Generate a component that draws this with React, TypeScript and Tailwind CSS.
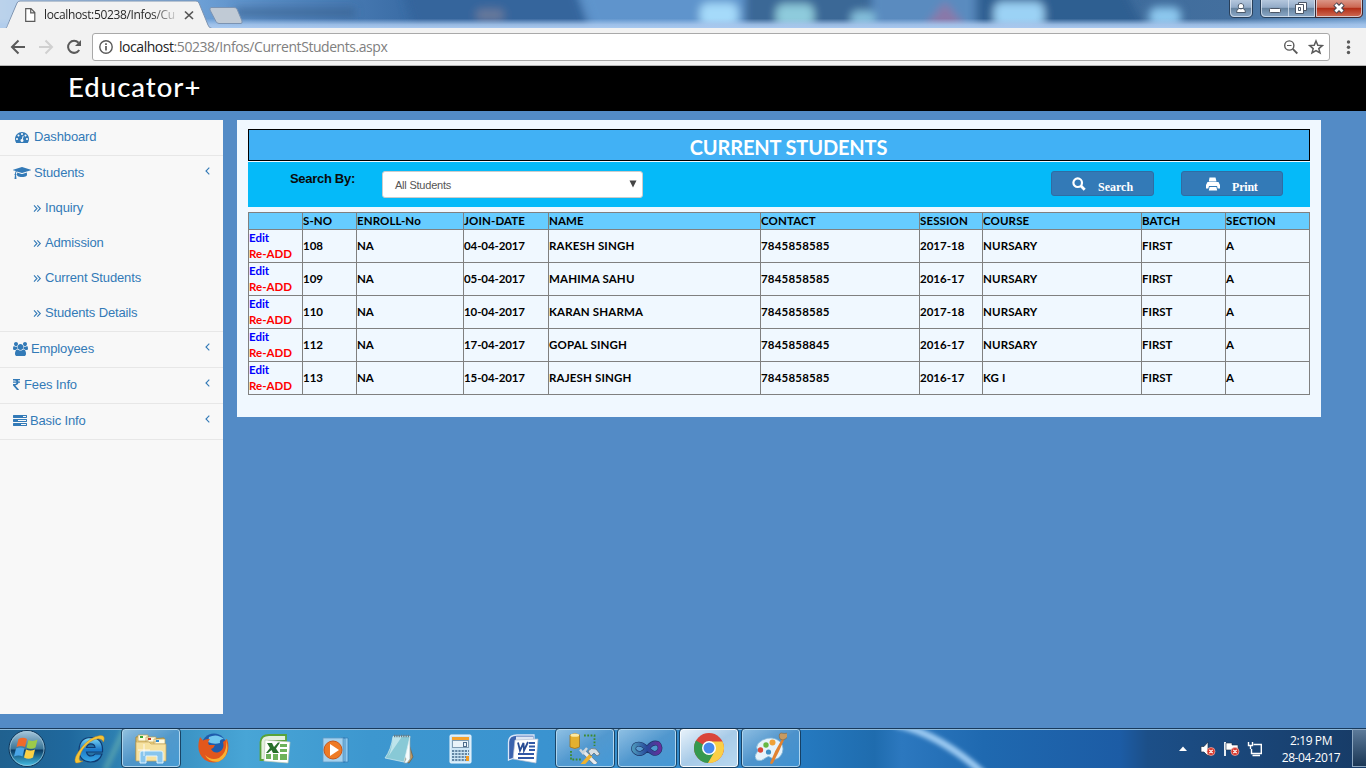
import type { ReactNode } from "react";

const PATHS = {
  gauge:
    "M384 384q0 53 -37.5 90.5t-90.5 37.5t-90.5 -37.5t-37.5 -90.5t37.5 -90.5t90.5 -37.5t90.5 37.5t37.5 90.5zM576 832q0 53 -37.5 90.5t-90.5 37.5t-90.5 -37.5t-37.5 -90.5t37.5 -90.5t90.5 -37.5t90.5 37.5t37.5 90.5zM1004 351l101 382q6 26 -7.5 48.5t-38.5 29.5t-48 -6.5t-30 -39.5l-101 -382q-60 -5 -107 -43.5t-63 -98.5q-20 -77 20 -146t117 -89t146 20t89 117q16 60 -6 117t-72 91zM1664 384q0 53 -37.5 90.5t-90.5 37.5t-90.5 -37.5t-37.5 -90.5t37.5 -90.5t90.5 -37.5t90.5 37.5t37.5 90.5zM1024 1024q0 53 -37.5 90.5t-90.5 37.5t-90.5 -37.5t-37.5 -90.5t37.5 -90.5t90.5 -37.5t90.5 37.5t37.5 90.5zM1472 832q0 53 -37.5 90.5t-90.5 37.5t-90.5 -37.5t-37.5 -90.5t37.5 -90.5t90.5 -37.5t90.5 37.5t37.5 90.5zM1792 384q0 -261 -141 -483q-19 -29 -54 -29h-1402q-35 0 -54 29q-141 221 -141 483q0 182 71 348t191 286t286 191t348 71t348 -71t286 -191t191 -286t71 -348z",
  cap: "M1774 700l18 -316q4 -69 -82 -128t-235 -93.5t-323 -34.5t-323 34.5t-235 93.5t-82 128l18 316l574 -181q22 -7 48 -7t48 7zM2304 1024q0 -23 -22 -31l-1120 -352q-4 -1 -10 -1t-10 1l-652 206q-43 -34 -71 -111.5t-34 -178.5q63 -36 63 -109q0 -69 -58 -107l58 -433q2 -14 -8 -25q-9 -11 -24 -11h-192q-15 0 -24 11q-10 11 -8 25l58 433q-58 38 -58 107q0 73 65 111q11 207 98 330l-333 104q-22 8 -22 31t22 31l1120 352q4 1 10 1t10 -1l1120 -352q22 -8 22 -31z",
  users:
    "M593 640q-162 -5 -265 -128h-134q-82 0 -138 40.5t-56 118.5q0 353 124 353q6 0 43.5 -21t97.5 -42.5t119 -21.5q67 0 133 23q-5 -37 -5 -66q0 -139 81 -256zM1664 3q0 -120 -73 -189.5t-194 -69.5h-874q-121 0 -194 69.5t-73 189.5q0 53 3.5 103.5t14 109t26.5 108.5t43 97.5t62 81t85.5 53.5t111.5 20q10 0 43 -21.5t73 -48t107 -48t135 -21.5t135 21.5t107 48t73 48t43 21.5q61 0 111.5 -20t85.5 -53.5t62 -81t43 -97.5t26.5 -108.5t14 -109t3.5 -103.5zM640 1280q0 -106 -75 -181t-181 -75t-181 75t-75 181t75 181t181 75t181 -75t75 -181zM1344 896q0 -159 -112.5 -271.5t-271.5 -112.5t-271.5 112.5t-112.5 271.5t112.5 271.5t271.5 112.5t271.5 -112.5t112.5 -271.5zM1920 671q0 -78 -56 -118.5t-138 -40.5h-134q-103 123 -265 128q81 117 81 256q0 29 -5 66q66 -23 133 -23q59 0 119 21.5t97.5 42.5t43.5 21q124 0 124 -353zM1792 1280q0 -106 -75 -181t-181 -75t-181 75t-75 181t75 181t181 75t181 -75t75 -181z",
  rupee:
    "M898 1066v-102q0 -14 -9 -23t-23 -9h-168q-23 -144 -129 -234t-276 -110q167 -178 459 -536q14 -16 4 -34q-8 -18 -29 -18h-195q-16 0 -25 12q-306 367 -498 571q-9 9 -9 22v127q0 13 9.5 22.5t22.5 9.5h112q132 0 212.5 43t102.5 125h-427q-14 0 -23 9t-9 23v102q0 14 9 23t23 9h413q-57 113 -268 113h-145q-13 0 -22.5 9.5t-9.5 22.5v133q0 14 9 23t23 9h832q14 0 23 -9t9 -23v-102q0 -14 -9 -23t-23 -9h-233q47 -61 64 -144h171q14 0 23 -9t9 -23z",
  tasks:
    "M1024 128h640v128h-640v-128zM640 640h1024v128h-1024v-128zM1280 1152h384v128h-384v-128zM1792 320v-256q0 -26 -19 -45t-45 -19h-1664q-26 0 -45 19t-19 45v256q0 26 19 45t45 19h1664q26 0 45 -19t19 -45zM1792 832v-256q0 -26 -19 -45t-45 -19h-1664q-26 0 -45 19t-19 45v256q0 26 19 45t45 19h1664q26 0 45 -19t19 -45zM1792 1344v-256q0 -26 -19 -45t-45 -19h-1664q-26 0 -45 19t-19 45v256q0 26 19 45t45 19h1664q26 0 45 -19t19 -45z",
};

function Glyph({ name, units }: { name: keyof typeof PATHS; units: number }) {
  return (
    <svg width={(units / 1792) * 14} height={14} viewBox={`0 0 ${units} 1792`} className="shrink-0 fill-[#337ab7]">
      <path transform="translate(0,1536) scale(1,-1)" d={PATHS[name]} />
    </svg>
  );
}

function TitleBackdrop() {
  return (
    <svg width="1366" height="28" viewBox="0 0 1366 28" className="absolute inset-0">
      <defs>
        <linearGradient id="tb" x1="0" x2="1366" gradientUnits="userSpaceOnUse">
          <stop offset="0" stopColor="#c3d8ee" />
          <stop offset="0.03" stopColor="#a9c8ea" />
          <stop offset="0.14" stopColor="#6fa2d8" />
          <stop offset="0.2" stopColor="#5689c1" />
          <stop offset="0.3" stopColor="#3a6ca5" />
          <stop offset="0.4" stopColor="#5e93cc" />
          <stop offset="0.5" stopColor="#4676a8" />
          <stop offset="0.62" stopColor="#3e6d9f" />
          <stop offset="0.76" stopColor="#3c6a9b" />
          <stop offset="0.9" stopColor="#436f9e" />
          <stop offset="1" stopColor="#6d9bcb" />
        </linearGradient>
        <linearGradient id="tbf" x1="0" x2="0" y1="0" y2="1">
          <stop offset="0.66" stopColor="#a9c8ee" stopOpacity="0" />
          <stop offset="0.88" stopColor="#a9c8ee" stopOpacity="0.85" />
          <stop offset="1" stopColor="#a9c8ee" />
        </linearGradient>
        <filter id="b3" filterUnits="userSpaceOnUse" x="0" y="-40" width="1366" height="110">
          <feGaussianBlur stdDeviation="4" />
        </filter>
      </defs>
      <rect width="1366" height="28" fill="url(#tb)" />
      <g filter="url(#b3)">
        <path d="M400 -20H572L596 50H420Z" fill="#34659c" />
        <path d="M576 -20H745V50H600Z" fill="#5f94cc" />
        <path d="M745 -20H870V50H745Z" fill="#3a6896" />
        <path d="M872 -20H975V50H872Z" fill="#5a8bbf" />
        <path d="M980 -20H1120L1155 50H980Z" fill="#2f5e91" />
        <rect x="235" y="8" width="120" height="9" fill="#37618e" opacity=".7" />
        <rect x="476" y="9" width="28" height="12" rx="5" fill="#67799a" />
        <rect x="700" y="3" width="38" height="24" rx="8" fill="#a5dafa" />
        <rect x="776" y="4" width="38" height="24" rx="8" fill="#8ecbdc" />
        <rect x="851" y="11" width="24" height="16" rx="6" fill="#84bfdc" />
        <path d="M924 28L945 2L966 28Z" fill="#8a78a8" />
        <rect x="994" y="2" width="50" height="26" rx="8" fill="#9bd2f5" />
        <rect x="1149" y="7" width="32" height="20" rx="8" fill="#8cc7ee" />
      </g>
      <rect width="1366" height="28" fill="url(#tbf)" />
    </svg>
  );
}

function TabStrip() {
  return (
    <div className="relative h-7 w-full overflow-hidden">
      <TitleBackdrop />
      <svg width="250" height="28" viewBox="0 0 250 28" className="absolute left-0 top-0">
        <path d="M0 28.5H5C7 28 7 26 8 24L17 3Q18 1 20 1H196Q198 1 199 3L208 25Q209 28 212 28.500" fill="#f2f2f2" stroke="#7d93b0" />
        <path d="M0 0H17L6 28H0Z" fill="#b6cfea" opacity=".6" />
        <path d="M211 7.500H234Q236 7.500 237 9L242 21Q242.500 23.500 241 23.500H219Q217 23.500 216 21.500L210 10Q209.500 8 211 7.500Z" fill="#c0cad5" stroke="#7b93b2" />
        <path d="M25.700 8.700H31L34.800 12.500V21.300H25.700ZM30.700 8.700V12.800H34.800" fill="#fff" stroke="#5a5a5a" strokeWidth="1.200" />
        <path d="M185 11.500L193 19M193 11.500L185 19" stroke="#555" strokeWidth="1.700" />
      </svg>
      <div className="relative ml-11 mt-[7px] w-[134px] overflow-hidden whitespace-nowrap bg-gradient-to-r from-[#222] from-80% to-[#222]/10 bg-clip-text font-['Open_Sans','Noto_Sans',sans-serif] text-[12px] leading-4 tracking-[-0.35px] text-transparent">
        localhost:50238/Infos/Cu
      </div>
      <svg width="140" height="20" viewBox="0 0 140 20" className="absolute right-0 top-0">
        <defs>
          <linearGradient id="wb" x1="0" x2="0" y1="0" y2="1">
            <stop offset="0" stopColor="#b9cbe0" />
            <stop offset=".45" stopColor="#93abc8" />
            <stop offset=".5" stopColor="#66839f" />
            <stop offset="1" stopColor="#8eabcb" />
          </linearGradient>
          <linearGradient id="wr" x1="0" x2="0" y1="0" y2="1">
            <stop offset="0" stopColor="#dd9c8d" />
            <stop offset=".45" stopColor="#cc6752" />
            <stop offset=".5" stopColor="#b32d16" />
            <stop offset="1" stopColor="#d0705a" />
          </linearGradient>
        </defs>
        <path d="M3.500 -1V13Q3.500 17.500 8 17.500H22Q26.500 17.500 26.500 13V-1Z" fill="url(#wb)" stroke="#283f5a" />
        <path d="M34.500 -1V13Q34.500 17.500 39 17.500H92V-1Z" fill="url(#wb)" stroke="#283f5a" />
        <path d="M89.500 -1V17.500H132Q136.500 17.500 136.500 13V-1Z" fill="url(#wr)" stroke="#3c2830" />
        <path d="M62.500 0V17M4.500 0V13Q5 16.500 8 16.500H22Q25.500 16 25.500 13V0M35.500 0V13Q36 16.500 39 16.500H88.500V0M90.500 0V16.500H132Q135.500 16 135.500 13V0" fill="none" stroke="#dce6f1" strokeOpacity=".75" />
        <path d="M15 3.500a2.700 2.700 0 1 1 -.1 0ZM10.500 12.500Q10.500 9 13 8.500H17Q19.500 9 19.500 12.500Z" fill="#fff" stroke="#4c5a6c" />
        <rect x="43.500" y="8.500" width="11" height="4" rx="1" fill="#fff" stroke="#4c5666" />
        <path d="M72.500 2.500H80.500V10.500H72.500Z" fill="#fff" stroke="#4c5666" />
        <path d="M69.500 4.500H77.500V13.500H69.500ZM72.500 7.500H74.500V10.500H72.500Z" fill="#fff" stroke="#4c5666" fillRule="evenodd" />
        <path d="M109 4L117 12M117 4L109 12" stroke="#4b4550" strokeWidth="5" />
        <path d="M109.500 4.500L116.500 11.500M116.500 4.500L109.500 11.500" stroke="#fff" strokeWidth="2.800" />
      </svg>
    </div>
  );
}

function Toolbar() {
  return (
    <div className="flex h-[38px] items-center border-b border-[#b6b6b6] bg-[#f2f2f2]">
      <svg width="92" height="38" viewBox="0 0 92 38" fill="none" className="shrink-0">
        <path d="M25 19H12.500M18.500 12.500L12 19L18.500 25.500" stroke="#5a5a5a" strokeWidth="2" />
        <path d="M39 19H51.500M45.500 12.500L52 19L45.500 25.500" stroke="#d0d0d0" strokeWidth="2" />
        <path d="M79.200 22A6 6 0 1 1 78.500 14.800" stroke="#5a5a5a" strokeWidth="2" />
        <path d="M81 12V18H75Z" fill="#5a5a5a" />
      </svg>
      <div className="flex h-7 w-[1238px] shrink-0 items-center rounded-[3px] border border-[#a9a9a9] bg-white pl-[5px] pr-[5px]">
        <svg width="16" height="16" viewBox="0 0 16 16" fill="none" className="shrink-0">
          <circle cx="8" cy="8" r="6.200" stroke="#5a5a5a" strokeWidth="1.400" />
          <path d="M8 4.300V6M8 7V11.500" stroke="#5a5a5a" strokeWidth="1.700" />
        </svg>
        <div className="ml-[5px] flex-1 whitespace-nowrap font-['Open_Sans','Noto_Sans',sans-serif] text-[14px] leading-5 tracking-[-0.45px] text-[#808080]">
          <span className="text-[#222]">localhost</span>:50238/Infos/CurrentStudents.aspx
        </div>
        <svg width="40" height="18" viewBox="0 0 40 18" fill="none" className="shrink-0">
          <circle cx="5.300" cy="7.500" r="4.600" stroke="#5a5a5a" strokeWidth="1.400" />
          <path d="M3 7.500H7.500" stroke="#5a5a5a" />
          <path d="M8.700 10.900L13.300 15.500" stroke="#5a5a5a" strokeWidth="1.800" />
          <path d="M33 3L34.800 7.300L39.300 7.600L35.800 10.600L37 15L33 12.600L29 15L30.200 10.600L26.700 7.600L31.200 7.300Z" stroke="#5a5a5a" strokeWidth="1.500" transform="translate(-1 0)" />
        </svg>
      </div>
      <svg width="36" height="20" viewBox="0 0 36 20" fill="#5a5a5a">
        <circle cx="18.500" cy="5" r="1.700" />
        <circle cx="18.500" cy="10.300" r="1.700" />
        <circle cx="18.500" cy="15.500" r="1.700" />
      </svg>
    </div>
  );
}

function Angle() {
  return (
    <svg width="5" height="8" viewBox="0 0 5 8" fill="none" className="ml-auto mr-[13px] mt-[-4px] shrink-0">
      <path d="M4.300 0.700L1 4L4.300 7.300" stroke="#337ab7" strokeWidth="1.100" />
    </svg>
  );
}

function MenuRow({ icon, label, pad, gap, arrow = true }: { icon: ReactNode; label: string; pad: string; gap: string; arrow?: boolean }) {
  return (
    <a className={`flex h-[35px] items-center ${pad} pb-[2px]`}>
      {icon}
      <span className={`${gap} leading-[18px]`}>{label}</span>
      {arrow && <Angle />}
    </a>
  );
}

function Sidebar() {
  const subs = ["Inquiry", "Admission", "Current Students", "Students Details"];
  return (
    <nav className="h-[594px] w-[223px] shrink-0 bg-[#f8f8f8] font-['Liberation_Sans',Arial,sans-serif] text-[13px] tracking-[-0.14px] text-[#337ab7] [&>div]:border-b [&>div]:border-[#e7e7e7]">
      <div>
        <MenuRow icon={<Glyph name="gauge" units={1792} />} label="Dashboard" pad="pl-[15px]" gap="ml-[5px]" arrow={false} />
      </div>
      <div>
        <MenuRow icon={<Glyph name="cap" units={2304} />} label="Students" pad="pl-[13px]" gap="ml-[3px]" />
        {subs.map((s) => (
          <a key={s} className="flex h-[35px] items-center pl-[33px] pb-[1px]">
            <svg width="9" height="9" viewBox="0 0 9 9" fill="none" className="shrink-0">
              <path d="M1 1.300L4 4.500L1 7.700M4.300 1.300L7.300 4.500L4.300 7.700" stroke="#337ab7" strokeWidth="1.100" />
            </svg>
            <span className="ml-[3px] leading-[18px]">{s}</span>
          </a>
        ))}
      </div>
      <div>
        <MenuRow icon={<Glyph name="users" units={1920} />} label="Employees" pad="pl-[13px]" gap="ml-[3px]" />
      </div>
      <div>
        <MenuRow icon={<Glyph name="rupee" units={898} />} label="Fees Info" pad="pl-[13px]" gap="ml-1" />
      </div>
      <div>
        <MenuRow icon={<Glyph name="tasks" units={1792} />} label="Basic Info" pad="pl-[13px]" gap="ml-[3px]" />
      </div>
    </nav>
  );
}

const HEADERS = ["", "S-NO", "ENROLL-No", "JOIN-DATE", "NAME", "CONTACT", "SESSION", "COURSE", "BATCH", "SECTION"];
const COLS = ["w-[54px]", "w-[54px]", "w-[107px]", "w-[85px]", "w-[212px]", "w-[159px]", "w-[63px]", "w-[159px]", "w-[84px]", "w-[84px]"];
const ROWS = [
  ["108", "NA", "04-04-2017", "RAKESH SINGH", "7845858585", "2017-18", "NURSARY", "FIRST", "A"],
  ["109", "NA", "05-04-2017", "MAHIMA SAHU", "7845858585", "2016-17", "NURSARY", "FIRST", "A"],
  ["110", "NA", "10-04-2017", "KARAN SHARMA", "7845858585", "2017-18", "NURSARY", "FIRST", "A"],
  ["112", "NA", "17-04-2017", "GOPAL SINGH", "7845858845", "2016-17", "NURSARY", "FIRST", "A"],
  ["113", "NA", "15-04-2017", "RAJESH SINGH", "7845858585", "2016-17", "KG I", "FIRST", "A"],
];

const TRACKING = ["", "", "tracking-[-0.1px]", "tracking-[0.15px]", "tracking-[0.2px]", "", "tracking-[0.15px]", "", ""];

function StudentsTable() {
  const cell = "border-b border-r border-[#808080] p-0 text-left font-bold";
  return (
    <table className="mt-[5px] w-[1062px] table-fixed border-separate border-spacing-0 border-l border-t border-[#808080] text-[11.5px] leading-4 text-black">
      <colgroup>
        {COLS.map((w, i) => (
          <col key={i} className={w} />
        ))}
      </colgroup>
      <thead>
        <tr className="h-[17px] bg-[#66ccff] tracking-[0.12px]">
          {HEADERS.map((h, i) => (
            <th key={i} className={cell}>{h}</th>
          ))}
        </tr>
      </thead>
      <tbody>
        {ROWS.map((r) => (
          <tr key={r[0]} className="h-[33px]">
            <td className={cell}>
              <a className="block text-[#0000ff]">Edit</a>
              <a className="block text-[#ff0000]">Re-ADD</a>
            </td>
            {r.map((c, i) => (
              <td key={i} className={`${cell} ${TRACKING[i]}`}>{c}</td>
            ))}
          </tr>
        ))}
      </tbody>
    </table>
  );
}

function Panel() {
  const btn =
    "flex h-[25px] items-center rounded-[3px] border border-[#2e6da4] bg-[#337ab7] font-['Liberation_Serif','Times_New_Roman',serif] text-[12px] font-bold leading-4 text-white";
  return (
    <section className="ml-[14px] h-[297px] w-[1084px] bg-[#f0f8ff] pl-[11px] pt-[9px] font-[Lato,sans-serif]">
      <h1 className="flex h-8 w-[1062px] items-center justify-center border border-black bg-[#41b1f5] pl-[19px] pt-[3px] text-[20px] font-bold leading-6 tracking-[-0.15px] text-white">
        CURRENT STUDENTS
      </h1>
      <div className="mt-px flex h-[45px] w-[1062px] items-start bg-[#05baf9] pt-[9px]">
        <label className="ml-[42px] w-[92px] font-['Liberation_Sans',Arial,sans-serif] text-[13px] font-bold leading-[15px] tracking-[-0.3px] text-[#0a0a0a]">
          Search By:
        </label>
        <div className="flex h-[27px] w-[261px] items-center rounded-[3px] border border-[#ccc] bg-white pl-3 pr-[5px] pt-px font-['Liberation_Sans',Arial,sans-serif] text-[11px] tracking-[-0.22px] text-[#555]">
          All Students
          <svg width="8" height="8" viewBox="0 0 8 8" className="mb-[3px] ml-auto">
            <path d="M0.500 0.500H7.500L4 7.500Z" fill="#444" />
          </svg>
        </div>
        <button className={`${btn} ml-[408px] w-[103px]`}>
          <svg width="14" height="14" viewBox="0 0 14 14" fill="none" className="ml-5 mt-px">
            <circle cx="5.700" cy="5.700" r="4.300" stroke="#fff" strokeWidth="2.200" />
            <path d="M9 9L12.700 12.700" stroke="#fff" strokeWidth="2.800" />
          </svg>
          <span className="ml-3 mt-[6px]">Search</span>
        </button>
        <button className={`${btn} ml-[27px] w-[102px]`}>
          <svg width="14" height="14" viewBox="0 0 14 14" fill="#fff" className="ml-6 mt-px shrink-0">
            <path d="M3.500 0.500H9.500L10.500 4.500H2.800ZM1.500 5H12.500L14 8V11.500H11.700L11 9H3L2.300 11.500H0V8ZM3.600 10H10.400L11.200 13.500H2.800Z" />
          </svg>
          <span className="ml-3 mt-[6px] tracking-[-0.2px]">Print</span>
        </button>
      </div>
      <StudentsTable />
    </section>
  );
}

function Slot({ children, active }: { children: ReactNode; active?: "on" | "top" }) {
  const look =
    active === "top"
      ? "border border-white/90 bg-gradient-to-br from-[#e6f1fa] via-[#a8cbe8] to-[#b8d8f0] outline outline-1 outline-[#12324f]/80"
      : active === "on"
        ? "border border-[#b8dbf2]/90 bg-gradient-to-br from-[#a3cbe8]/80 via-[#5d9ccf]/70 to-[#4fa0dc]/60 outline outline-1 outline-[#12324f]/80"
        : "";
  return <div className={`flex h-[38px] w-[58px] shrink-0 items-center justify-center rounded-[3px] mx-px ${look}`}>{children}</div>;
}

function Icon({ children }: { children: ReactNode }) {
  return (
    <svg width="32" height="32" viewBox="0 0 32 32" className="shrink-0">
      {children}
    </svg>
  );
}

function TaskbarBackdrop() {
  return (
    <svg width="1366" height="40" viewBox="0 0 1366 40" className="absolute inset-0">
      <defs>
        <linearGradient id="kb" x1="0" x2="1366" gradientUnits="userSpaceOnUse">
          <stop offset="0" stopColor="#20618f" />
          <stop offset=".05" stopColor="#1f689d" />
          <stop offset=".09" stopColor="#2f83b4" />
          <stop offset=".18" stopColor="#48a5d6" />
          <stop offset=".27" stopColor="#3d97cf" />
          <stop offset=".4" stopColor="#3a93d0" />
          <stop offset=".5" stopColor="#348bcb" />
          <stop offset=".59" stopColor="#2579bf" />
          <stop offset=".64" stopColor="#1f6cae" />
          <stop offset=".66" stopColor="#2c78bf" />
          <stop offset=".72" stopColor="#1f69b0" />
          <stop offset=".82" stopColor="#1c5ca5" />
          <stop offset=".84" stopColor="#1c4f88" />
          <stop offset="1" stopColor="#173b66" />
        </linearGradient>
        <linearGradient id="orb" x1="0" x2="0" y1="0" y2="1">
          <stop offset="0" stopColor="#a9c9dd" />
          <stop offset=".5" stopColor="#3c7799" />
          <stop offset=".55" stopColor="#0c3d66" />
          <stop offset="1" stopColor="#46c2e8" />
        </linearGradient>
        <filter id="b2" x="-50%" y="-50%" width="200%" height="200%">
          <feGaussianBlur stdDeviation="2" />
        </filter>
      </defs>
      <rect width="1366" height="40" fill="url(#kb)" />
      <path d="M895 -4Q940 6 984 46" fill="none" stroke="#9ccaf2" strokeWidth="7" filter="url(#b2)" />
      <path d="M105 42L125 0" stroke="#7fc5b0" strokeOpacity=".4" strokeWidth="6" filter="url(#b2)" />
      <path d="M0 .5H1366" stroke="#183a5c" />
      <path d="M0 1.500H1366" stroke="#8fbbdc" />
      <circle cx="27" cy="20.500" r="18" fill="url(#orb)" stroke="#0f3557" />
      <circle cx="27" cy="20.500" r="17" fill="none" stroke="#a5cce0" strokeOpacity=".7" />
      <path d="M18.500 11Q23 8.500 27 11L25 19Q21 17 16.500 19Z" fill="#f06a2b" />
      <path d="M28.500 12Q33 14 37.500 11.500L35.500 19.500Q31 22 26.500 19.500Z" fill="#9cca4a" />
      <path d="M16 20.500Q20.500 18.500 24.500 20.500L22.500 28.500Q18.500 26.500 14 28.500Z" fill="#4aa5e6" />
      <path d="M26 21.500Q30.500 23.500 35 21.500L33 29.500Q28.500 32 24 29.500Z" fill="#fcd045" />
    </svg>
  );
}

function Taskbar() {
  return (
    <footer className="relative flex h-10 overflow-hidden">
      <TaskbarBackdrop />
      <div className="relative flex pl-[59px] pt-px gap-[2px]">
        <Slot>
          <Icon>
            <defs>
              <linearGradient id="ie" x1="0" x2="0" y1="0" y2="1">
                <stop offset="0" stopColor="#7edcf9" />
                <stop offset=".5" stopColor="#1b78c8" />
                <stop offset="1" stopColor="#39a9e6" />
              </linearGradient>
            </defs>
            <path d="M29.500 20H13.500Q14.500 24 18 24Q20.500 24 22 22H29Q26.500 30 17.500 30Q6 29.500 6 18Q6.500 5.500 18 5.500Q30.500 6 29.500 20ZM13.500 15.500H22Q21.500 11.800 17.800 11.800Q14.500 11.800 13.500 15.500Z" fill="url(#ie)" stroke="#0f3b73" strokeWidth="1.200" />
            <path d="M30.500 10Q33 3 27 3.500Q17 5 9 15Q0 26 2.500 30.500Q4.500 32 10 29Q5 30 6.500 24.500Q9 16 17 10Q27 3.500 30.500 10Z" fill="#f5c437" stroke="#b4872a" strokeWidth=".5" />
          </Icon>
        </Slot>
        <Slot active="on">
          <Icon>
            <path d="M1 5L13 4L15 7L29 6V28H1Z" fill="#edd27f" stroke="#a8883c" />
            <path d="M3 3H13V9H3ZM11 5H21V10H11ZM19 7H30V12H19Z" fill="#fffbe0" stroke="#bfa052" strokeWidth=".7" />
            <path d="M5 4H8V6H5Z" fill="#36a834" />
            <path d="M13 6H16V8H13Z" fill="#cc3924" />
            <path d="M21 8H24V10H21Z" fill="#328bd0" />
            <path d="M1 10H14L16 12H31V29H1Z" fill="#f6e2a0" stroke="#c4a55a" strokeWidth=".7" />
            <path d="M5 31V21Q5 19 7 19H26Q28 19 28 21V31H22V24H11V31Z" fill="#87c5ed" stroke="#e0f3ff" />
            <path d="M9 12V24M3 18H15" stroke="#fff" strokeOpacity=".8" />
          </Icon>
        </Slot>
        <Slot>
          <Icon>
            <circle cx="17" cy="14" r="12.500" fill="#1e5cad" />
            <path d="M12 5Q20 1 27 7Q22 7 23 11Q17 13 11 10Z" fill="#6fc7ef" />
            <path d="M3 5L6 8.500Q9 6.500 13 7Q10 10 12 13L18 13Q17 16 14 17Q17 22 22 20Q28 17 26 10L30 7Q34 18 27 26Q18 34 8 28Q-2 20 3 5Z" fill="#e2571c" />
            <path d="M29 7Q31 20 22 26Q14 29 8 23Q12 31 22 29.500Q34 24 29 7Z" fill="#f9b233" />
          </Icon>
        </Slot>
        <Slot>
          <Icon>
            <path d="M1.500 28V10Q2 3 10 3H27V9H10V28Z" fill="#e5efe0" stroke="#58a33a" strokeWidth="1.800" />
            <path d="M6 8L31 10L29 31L5 29Z" fill="#fff" stroke="#bbc8b5" strokeWidth=".7" />
            <path d="M21 12H28V15H21ZM21 17H28V20H21ZM21 22H28V28H21ZM14 22H19V28H14ZM7 22H12V27H7Z" fill="#6db25a" />
            <path d="M8 11H13L15 15L19 10.500H21L17 16.500L20 21H14L12.500 18L9 21H7L11 16Z" fill="#28702b" />
          </Icon>
        </Slot>
        <Slot>
          <Icon>
            <path d="M22 6H27V30H22ZM20 6H24V30H20Z" fill="#8ecaf0" stroke="#3279b1" strokeWidth=".7" />
            <path d="M2 6H22V30H2Z" fill="#a5d1ee" stroke="#5d99c4" strokeWidth=".8" />
            <circle cx="12" cy="18" r="9" fill="#ee7a25" stroke="#c9581a" />
            <path d="M9 12L18 18L9 24Z" fill="#fff" />
          </Icon>
        </Slot>
        <Slot>
          <Icon>
            <path d="M24 6L30 25L26 31L20 29Z" fill="#bd9761" stroke="#6b5a43" strokeWidth=".7" />
            <path d="M10 4H27V27L24 31H21L23 27Z" fill="#f5fbfc" stroke="#86a7b0" strokeWidth=".7" />
            <path d="M10 4.500H27L21 30L2 26Q8 18 10 4.500Z" fill="#88c9d6" stroke="#d6edf0" strokeWidth=".7" />
            <path d="M10 4.500H19L5 25Q9 18 10 4.500Z" fill="#d4eff3" opacity=".7" />
            <path d="M11 4H27" stroke="#657c86" strokeWidth="2.500" strokeDasharray="1.300 1" />
          </Icon>
        </Slot>
        <Slot>
          <Icon>
            <rect x="5" y="3" width="21" height="28" rx="1" fill="#cde6f6" stroke="#f0f9ff" />
            <rect x="7" y="5" width="17" height="3" fill="#f5a12c" />
            <rect x="7.500" y="8.500" width="16" height="7" fill="#e9f3f9" stroke="#7e9cb3" />
            <rect x="18.500" y="10.500" width="3" height="4" fill="none" stroke="#4d6b8a" />
            <path d="M7 19H24M7 22H24M7 25H24M7 28H24" stroke="#6285a3" strokeWidth="1.800" strokeDasharray="2.200 1" />
            <path d="M21 24H24V29H21Z" fill="#f39a22" />
          </Icon>
        </Slot>
        <Slot>
          <Icon>
            <path d="M1.500 28V10Q2 3 10 3H27V9H10V25Z" fill="#3b63ae" stroke="#dbe6f8" strokeWidth="1.300" />
            <path d="M9 4.500H26V9H9Z" fill="#dfe7f4" />
            <path d="M8 8L31 7L29 31L6 27Z" fill="#fff" stroke="#b4bfd2" strokeWidth=".7" />
            <path d="M22 11H28M22 14.500H28M22 18H28M11 22H27M11 26H27" stroke="#3158a6" strokeWidth="2" />
            <path d="M11 10.500L13 18.500L16.500 11L17 18.500L21 10" fill="none" stroke="#284b93" strokeWidth="1.800" />
          </Icon>
        </Slot>
        <Slot active="on">
          <Icon>
            <path d="M1 3V15Q6 18 10.500 15V3Q6 0 1 3Z" fill="#e4b02e" stroke="#9b6a16" strokeWidth=".7" />
            <ellipse cx="5.800" cy="3.200" rx="4.400" ry="1.600" fill="#fbe9a2" />
            <path d="M15 3.500H25.500V14M2 19V27.500H13" fill="none" stroke="#3c8a2c" strokeWidth="1.800" strokeDasharray="1.800 1.500" />
            <path d="M27 32L14 19" stroke="#6d7a85" strokeWidth="4.500" />
            <path d="M27 32L14 19" stroke="#e6ebef" strokeWidth="3.200" />
            <path d="M11 17.500L14 21L18 16" fill="none" stroke="#cdd6dc" strokeWidth="2.500" />
            <path d="M13 33L22 23" stroke="#eeb22f" strokeWidth="3.500" />
            <path d="M19 19Q22 15 27 17L31 22L28 24L25 21L22 24Z" fill="#d8dfe5" stroke="#65727c" strokeWidth=".8" />
          </Icon>
        </Slot>
        <Slot active="on">
          <Icon>
            <defs>
              <linearGradient id="vs" x1="0" x2="1">
                <stop offset="0" stopColor="#4b94ba" />
                <stop offset=".5" stopColor="#27489a" />
                <stop offset="1" stopColor="#66309b" />
              </linearGradient>
            </defs>
            <path d="M15.500 16Q10 11 5.500 12.500Q2 14 2.800 18Q5 22 10 21.500Q14 20 17.500 15Q22 9.500 27 11.500Q30 14 28.500 18.500Q26 22.500 22 21Q18.500 19 15.500 16Z" fill="none" stroke="#1c3466" strokeWidth="4.800" />
            <path d="M15.500 16Q10 11 5.500 12.500Q2 14 2.800 18Q5 22 10 21.500Q14 20 17.500 15Q22 9.500 27 11.500Q30 14 28.500 18.500Q26 22.500 22 21Q18.500 19 15.500 16Z" fill="none" stroke="url(#vs)" strokeWidth="3.600" />
          </Icon>
        </Slot>
        <Slot active="top">
          <Icon>
            <circle cx="16" cy="16" r="15" fill="#d9453a" />
            <path d="M16 16L3 8.500A15 15 0 0 0 15 31L22.500 19.500Z" fill="#35994f" />
            <path d="M16 9.500H29.500A15 15 0 0 1 15 31L22 19Z" fill="#fbcf45" />
            <circle cx="16" cy="16" r="7" fill="#fff" />
            <circle cx="16" cy="16" r="5.500" fill="#4789ec" />
          </Icon>
        </Slot>
        <Slot active="on">
          <Icon>
            <path d="M9 8Q19 3 27 10Q32 17 27 24Q23 29 18 26Q15 23 12 26Q8 30 3 28Q0 24 3 21Q6 18 3 16Q3 11 9 8Z" transform="translate(-1.500 0)" fill="#e6f3fb" stroke="#82b5d6" strokeWidth=".8" />
            <circle cx="5.500" cy="18" r="2.700" fill="#dd4a38" />
            <circle cx="11" cy="13" r="2.700" fill="#67b845" />
            <circle cx="17.500" cy="10.500" r="3" fill="#efa137" />
            <circle cx="13.500" cy="20" r="2.600" fill="#3e8fc5" />
            <path d="M15 31Q20 18 27 7L29 8Q24 20 18 31Q16 33 15 31Z" fill="#e28230" />
            <path d="M25 7Q23 2 26 1Q30 2 33 1Q34 6 28 8Z" fill="#c79a61" stroke="#8c6436" strokeWidth=".6" />
          </Icon>
        </Slot>
      </div>
      <svg width="96" height="40" viewBox="0 0 96 40" className="relative ml-auto shrink-0">
        <path d="M13 23L17 18.500L21 23Z" fill="#fff" />
        <path d="M35 18.500H38L42 14V28L38 24H35Z" fill="#fff" stroke="#1c2f47" strokeWidth=".7" />
        <path d="M59 14V28" stroke="#fff" strokeWidth="1.800" />
        <path d="M60 15H66V17H72V24H66V22H60Z" fill="#fff" stroke="#1c2f47" strokeWidth=".6" />
        <circle cx="45" cy="23.500" r="4" fill="#d8382c" stroke="#f2b5ae" strokeWidth=".7" />
        <circle cx="69" cy="23.500" r="4" fill="#d8382c" stroke="#f2b5ae" strokeWidth=".7" />
        <path d="M43.300 21.800L46.700 25.200M46.700 21.800L43.300 25.200M67.300 21.800L70.700 25.200M70.700 21.800L67.300 25.200" stroke="#fff" strokeWidth="1.200" />
        <path d="M87.500 16.500H95.300V25.500H85.500V21M86.500 27.500H94" fill="none" stroke="#fff" strokeWidth="1.400" />
        <path d="M82.500 14V17.500H86.500V14M84.500 17.500V21" fill="none" stroke="#fff" strokeWidth="1.400" />
      </svg>
      <div className="relative w-[90px] pl-2 pt-[4px] text-center font-['Open_Sans','Noto_Sans',sans-serif] text-[12px] leading-[17px] tracking-[-0.4px] text-white">
        <div>2:19 PM</div>
        <div>28-04-2017</div>
      </div>
      <div className="relative mt-px h-[38px] w-[14px] border border-r-0 border-[#8ba6c0] bg-gradient-to-b from-[#5c7a99] to-[#1b3755]" />
    </footer>
  );
}

export default function App() {
  return (
    <div className="flex h-[768px] w-[1366px] flex-col overflow-hidden bg-[#538bc6]">
      <TabStrip />
      <Toolbar />
      <header className="h-[45px] shrink-0 bg-black pl-[68px] pt-[5px] font-[Lato,sans-serif] text-[27.5px] font-medium leading-8 tracking-[1px] text-white">
        Educator+
      </header>
      <main className="flex flex-1 items-start pt-[9px]">
        <Sidebar />
        <Panel />
      </main>
      <Taskbar />
    </div>
  );
}
